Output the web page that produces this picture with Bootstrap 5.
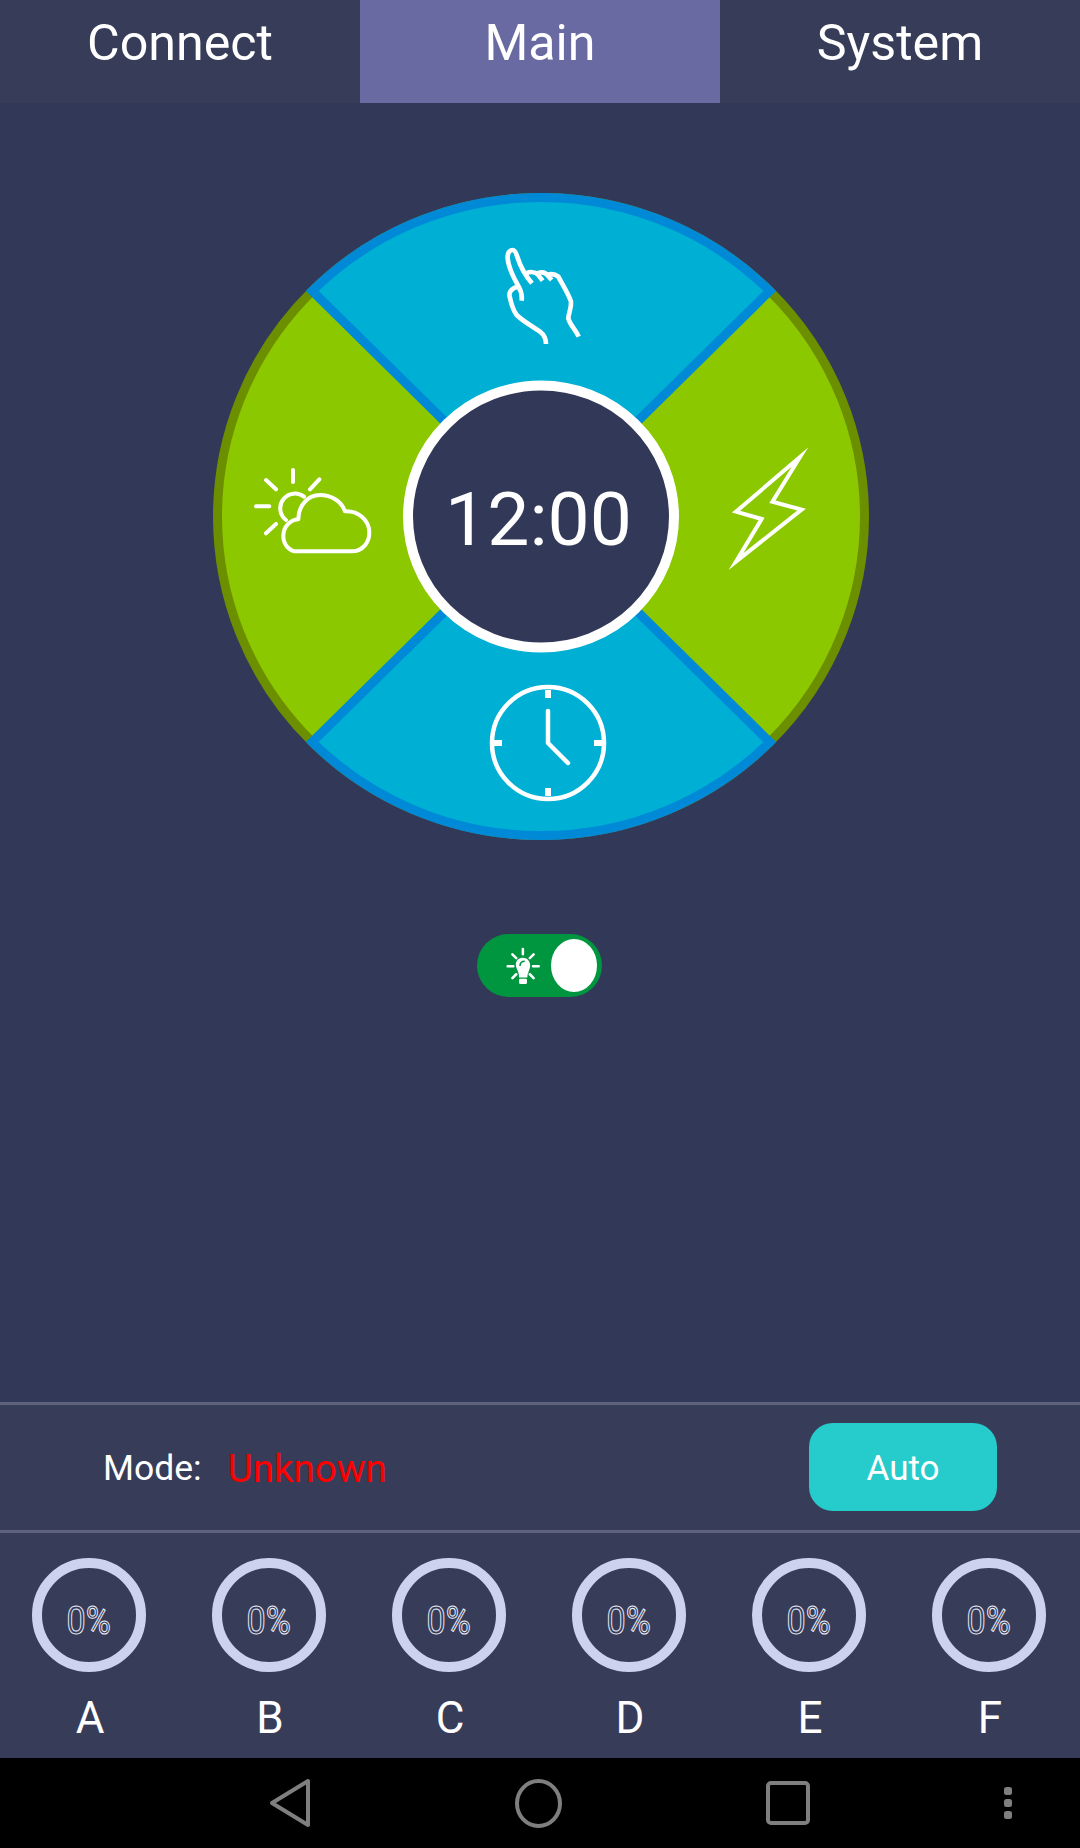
<!DOCTYPE html>
<html lang="en">
<head>
  <meta charset="UTF-8" />
  <meta name="viewport" content="width=device-width, initial-scale=1" />
  <title>Lamp Controller</title>
  <link href="https://cdn.jsdelivr.net/npm/bootstrap@5.3.0/dist/css/bootstrap.min.css" rel="stylesheet" />
  <style>
    html, body { height: 100%; }
    body {
      font-family: Roboto, "Liberation Sans", sans-serif;
      background: #323958;
      color: #fff;
      overflow: hidden;
    }
    .app-shell { height: 1848px; }
    /* Tabs */
    .tab-bar { height: 103px; background: #373c59; }
    .tab-item {
      width: 360px;
      padding-bottom: 17px;
      font-size: 50.2px;
      line-height: 1;
    }
    .tab-item.is-active { background: #686aa1; }
    /* Dial */
    .stage { padding-top: 90px; }
    .dial { width: 656px; height: 648px; margin-left: 2px; }
    .dial-time { padding: 5px 5px 0 0; font-size: 75px; line-height: 1; }
    .lamp-toggle {
      width: 125px;
      height: 63px;
      margin-top: 93px;
      margin-left: -1px;
      padding-right: 5px;
      border-radius: 32px;
      background: #009640;
    }
    .lamp-icon { width: 35px; height: 38px; margin-right: 10px; }
    .lamp-knob { width: 46px; height: 53px; border-radius: 50%; background: #fff; }
    /* Bottom panels */
    .panel { background: #373c59; border-top: 3px solid #5f627c; }
    .mode-row { height: 128px; padding: 0 83px 0 103px; font-size: 35.5px; }
    .mode-row > span { margin-top: 3px; }
    .mode-state { margin-left: 26px; font-size: 38.5px; color: #ff0000; }
    .auto-btn {
      width: 188px;
      height: 88px;
      margin-left: auto;
      margin-bottom: 2px;
      padding-top: 6px;
      border: 0;
      border-radius: 24px;
      background: #26cccc;
      color: #fff;
      font-size: 35px;
    }
    .gauge-row { height: 228px; padding-top: 25px; }
    .gauge-row .row { margin-left: -1px; margin-right: 1px; }
    .gauge-ring {
      width: 114px;
      height: 114px;
      padding-top: 11px;
      border: 10px solid #cdd2ef;
    }
    .gauge-pct {
      display: inline-block;
      font-size: 38px;
      line-height: 1;
      color: transparent;
      -webkit-text-stroke: 1px #eef0fa;
      transform: scaleX(.9);
    }
    .gauge-name { margin: 20px 0 0 2px; font-size: 44px; line-height: 1.2; }
    /* Android nav */
    .sys-nav { height: 90px; padding-left: 269px; gap: 204px; background: #000; }
    .sys-nav svg { fill: none; stroke: #7f7f7f; stroke-width: 4; stroke-linejoin: round; }
    .sys-nav .sys-dots { margin-left: -10px; fill: #7f7f7f; stroke: none; }
    .dial-line { fill: none; stroke: #fff; stroke-width: 4.5; stroke-linecap: round; stroke-linejoin: round; }
  </style>
</head>
<body>
  <div class="app-shell d-flex flex-column">
    <!-- Tabs -->
    <nav class="tab-bar d-flex flex-shrink-0">
      <div class="tab-item d-flex align-items-center justify-content-center">Connect</div>
      <div class="tab-item is-active d-flex align-items-center justify-content-center">Main</div>
      <div class="tab-item d-flex align-items-center justify-content-center">System</div>
    </nav>

    <!-- Dial and lamp switch -->
    <main class="stage flex-grow-1 d-flex flex-column align-items-center">
      <div class="dial position-relative">
        <svg width="656" height="648" viewBox="0 0 656 648">
          <ellipse cx="328" cy="323.5" rx="323.5" ry="319" fill="#8cc800" stroke="#6c8f00" stroke-width="9" />
          <path d="M328 323.5 L99.25 97.9 A323.5 319 0 0 1 556.75 97.9 Z" fill="#00afd4" stroke="#0089d6" stroke-width="9" />
          <path d="M328 323.5 L99.25 549.1 A323.5 319 0 0 0 556.75 549.1 Z" fill="#00afd4" stroke="#0089d6" stroke-width="9" />
          <ellipse cx="328" cy="323.5" rx="133" ry="131" fill="#323958" stroke="#fff" stroke-width="10" />

          <!-- hand -->
          <g transform="translate(277 37) scale(.3333)" fill="none" stroke="#fff" stroke-width="14" stroke-linecap="butt" stroke-linejoin="round">
            <path d="M95 212 C97 195 92 180 85 168 C72 145 55 115 53 85 C52 70 58 60 68 60 C75 60 78 68 81 78 C88 100 100 130 126 160" />
            <path d="M108 130 C120 125 135 125 143 133 L158 152" />
            <path d="M143 130 C155 125 165 127 172 135 L185 150" />
            <path d="M172 135 C185 130 195 132 205 140 C215 160 235 190 243 215 C245 235 235 250 235 265 C240 285 258 300 266 320" />
            <path d="M85 170 C70 172 58 182 58 195 C62 215 68 240 80 255 C100 275 130 290 150 305 C163 315 168 325 168 342" />
          </g>

          <!-- sun and cloud -->
          <g transform="translate(17 247) scale(.3333)" fill="none" stroke="#fff" stroke-width="12" stroke-linecap="round" stroke-linejoin="round">
            <path d="M189 90 V126 M108 120 L138 148 M268 118 L240 148 M78 199 H118 M108 280 L138 252" />
            <path d="M222 170 A44 44 0 1 0 168 240" />
            <path d="M200 334 H365 C400 334 418 305 418 278 C418 240 385 212 345 214 C335 185 305 165 270 165 C235 165 205 195 205 238 C180 240 160 260 160 288 C160 315 180 334 200 334 Z" />
          </g>

          <!-- bolt -->
          <path d="M587 264 L559.4 308.8 L588.6 316.6 L523 368.5 L548.6 326 L523 318.7 Z" fill="none" stroke="#fff" stroke-width="4" stroke-miterlimit="12" />

          <!-- clock -->
          <circle cx="335" cy="550" r="56" fill="none" stroke="#fff" stroke-width="4.5" />
          <path d="M335 497 V505 M335 595 V603 M281 550 H289 M381 550 H389" stroke="#fff" stroke-width="6" />
          <path class="dial-line" d="M335 518 V550 L355 570" />
        </svg>
        <div class="dial-time position-absolute top-0 start-0 w-100 h-100 d-flex align-items-center justify-content-center">12:00</div>
      </div>

      <div class="lamp-toggle d-flex align-items-center justify-content-end">
        <svg class="lamp-icon" viewBox="105 72 110 120">
          <path d="M158 78 V95 M125 95 L137 107 M192 95 L180 107 M110 133 H128 M190 133 H208 M125 170 L137 158 M192 170 L180 158" stroke="#fff" stroke-width="8" stroke-linecap="round" fill="none" />
          <path d="M158 106 C138 106 132 124 138 138 C143 150 146 155 146 168 H172 C172 155 177 150 180 138 C185 122 174 106 158 106 Z" fill="#fff" />
          <path d="M149 132 C149 122 155 117 164 117" stroke="#009640" stroke-width="5" fill="none" />
          <rect x="146" y="172" width="25" height="17" rx="4" fill="#fff" />
        </svg>
        <div class="lamp-knob"></div>
      </div>
    </main>

    <!-- Mode -->
    <section class="panel mode-row d-flex align-items-center flex-shrink-0">
      <span>Mode:</span>
      <span class="mode-state">Unknown</span>
      <button class="auto-btn" type="button">Auto</button>
    </section>

    <!-- Channel gauges -->
    <section class="panel gauge-row flex-shrink-0">
      <div class="row g-0 text-center">
        <div class="col-2 d-flex flex-column align-items-center">
          <div class="gauge-ring rounded-circle d-flex align-items-center justify-content-center"><span class="gauge-pct">0%</span></div>
          <div class="gauge-name">A</div>
        </div>
        <div class="col-2 d-flex flex-column align-items-center">
          <div class="gauge-ring rounded-circle d-flex align-items-center justify-content-center"><span class="gauge-pct">0%</span></div>
          <div class="gauge-name">B</div>
        </div>
        <div class="col-2 d-flex flex-column align-items-center">
          <div class="gauge-ring rounded-circle d-flex align-items-center justify-content-center"><span class="gauge-pct">0%</span></div>
          <div class="gauge-name">C</div>
        </div>
        <div class="col-2 d-flex flex-column align-items-center">
          <div class="gauge-ring rounded-circle d-flex align-items-center justify-content-center"><span class="gauge-pct">0%</span></div>
          <div class="gauge-name">D</div>
        </div>
        <div class="col-2 d-flex flex-column align-items-center">
          <div class="gauge-ring rounded-circle d-flex align-items-center justify-content-center"><span class="gauge-pct">0%</span></div>
          <div class="gauge-name">E</div>
        </div>
        <div class="col-2 d-flex flex-column align-items-center">
          <div class="gauge-ring rounded-circle d-flex align-items-center justify-content-center"><span class="gauge-pct">0%</span></div>
          <div class="gauge-name">F</div>
        </div>
      </div>
    </section>

    <!-- Android navigation bar -->
    <footer class="sys-nav d-flex align-items-center flex-shrink-0">
      <svg width="42" height="50" viewBox="0 0 42 50"><path d="M39 3 L3 25 L39 47 Z" /></svg>
      <svg width="47" height="49" viewBox="0 0 47 49"><ellipse cx="23.5" cy="24.5" rx="21.5" ry="22.5" /></svg>
      <svg width="44" height="44" viewBox="0 0 44 44"><rect x="2" y="2" width="40" height="40" rx="3" /></svg>
      <svg class="sys-dots" width="8" height="32" viewBox="0 0 8 32"><rect y="0" width="8" height="8" rx="2.5" /><rect y="12" width="8" height="8" rx="2.5" /><rect y="24" width="8" height="8" rx="2.5" /></svg>
    </footer>
  </div>
  <script src="https://cdn.jsdelivr.net/npm/bootstrap@5.3.0/dist/js/bootstrap.bundle.min.js"></script>
</body>
</html>
